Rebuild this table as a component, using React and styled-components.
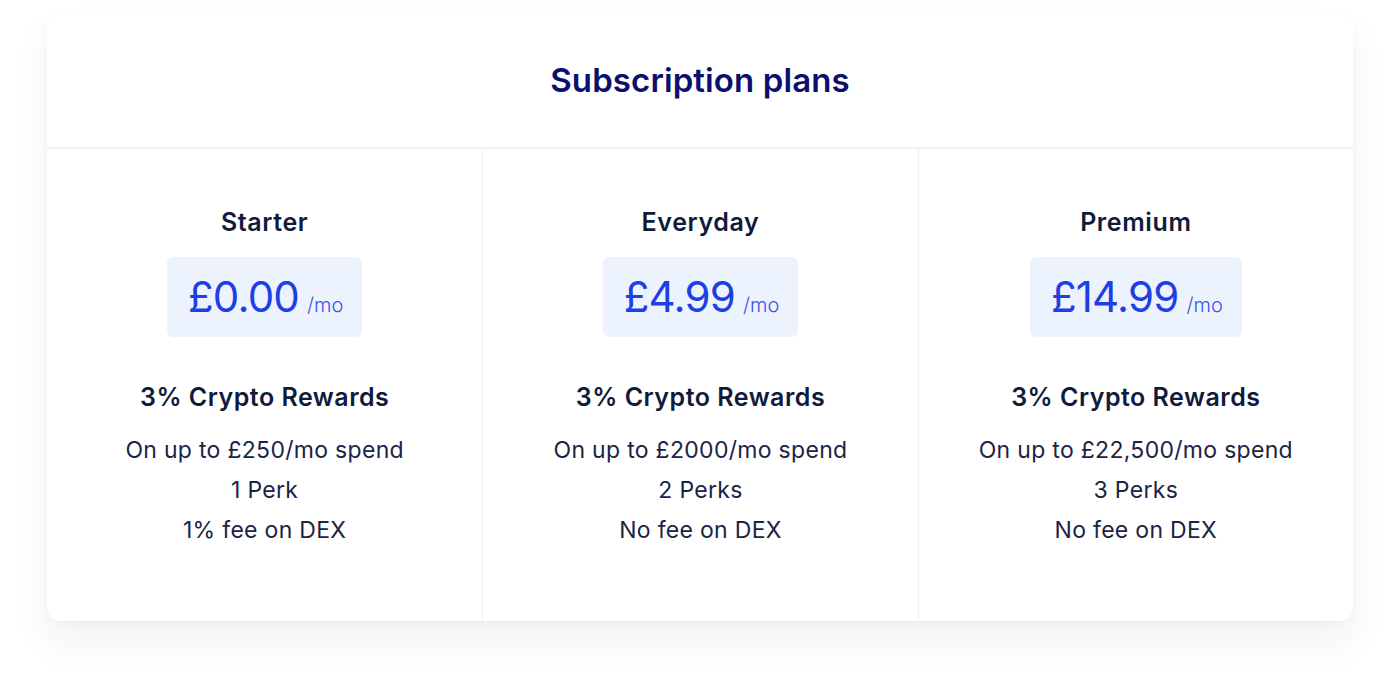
import React from 'react';
import styled, { createGlobalStyle } from 'styled-components';

const GlobalStyle = createGlobalStyle`
  html, body {
    margin: 0;
    padding: 0;
    background: #ffffff;
  }
  body {
    font-family: Inter, "Noto Sans", "Liberation Sans", sans-serif;
    -webkit-font-smoothing: antialiased;
  }
`;

const Page = styled.div`
  width: 1400px;
  height: 700px;
  padding: 13px 47px 0;
  box-sizing: border-box;
`;

const Card = styled.section`
  background: #ffffff;
  border-radius: 14px;
  box-shadow: 0 22px 40px rgba(20, 30, 60, 0.06), 0 2px 10px rgba(20, 30, 60, 0.03);
  overflow: hidden;
`;

const Header = styled.header`
  height: 134px;
  display: flex;
  align-items: center;
  justify-content: center;
  border-bottom: 2px solid #eef0f4;
`;

const Title = styled.h1`
  margin: 0;
  font-size: 33px;
  font-weight: 600;
  color: #0b0f6e;
  letter-spacing: 0.1px;
`;

const Plans = styled.div`
  display: grid;
  grid-template-columns: repeat(3, 1fr);
  height: 472px;
`;

const Plan = styled.div`
  display: flex;
  flex-direction: column;
  align-items: center;
  padding-top: 58px;
  border-left: ${p => (p.first ? 'none' : '1.5px solid #eceef2')};
`;

const PlanName = styled.h2`
  margin: 0;
  font-size: 25px;
  line-height: 30px;
  font-weight: 600;
  letter-spacing: 0.6px;
  color: #101b3b;
`;

const PriceBox = styled.div`
  margin-top: 20px;
  height: 80px;
  padding: 0 19px 0 21px;
  display: flex;
  align-items: baseline;
  justify-content: center;
  line-height: 80px;
  background: #edf3fe;
  border-radius: 6px;
  color: #1d3fe3;
`;

const Amount = styled.span`
  font-size: 42px;
  font-weight: 400;
  letter-spacing: -0.8px;
`;

const Per = styled.span`
  margin-left: 8px;
  font-size: 20px;
  font-weight: 300;
  color: #3a55e0;
`;

const Rewards = styled.h3`
  margin: 45px 0 0;
  font-size: 25px;
  line-height: 30px;
  font-weight: 600;
  letter-spacing: 0.5px;
  color: #101b3b;
`;

const Features = styled.ul`
  list-style: none;
  margin: 18px 0 0;
  padding: 0;
  text-align: center;
`;

const Feature = styled.li`
  font-size: 23px;
  line-height: 40px;
  font-weight: 400;
  letter-spacing: 0.3px;
  color: #1a2444;
`;

const plans = [
  { name: 'Starter', price: '£0.00', features: ['On up to £250/mo spend', '1 Perk', '1% fee on DEX'] },
  { name: 'Everyday', price: '£4.99', features: ['On up to £2000/mo spend', '2 Perks', 'No fee on DEX'] },
  { name: 'Premium', price: '£14.99', features: ['On up to £22,500/mo spend', '3 Perks', 'No fee on DEX'] },
];

export default function App() {
  return (
    <Page>
      <GlobalStyle />
      <Card>
        <Header>
          <Title>Subscription plans</Title>
        </Header>
        <Plans>
          {plans.map((plan, i) => (
            <Plan key={plan.name} first={i === 0}>
              <PlanName>{plan.name}</PlanName>
              <PriceBox>
                <Amount>{plan.price}</Amount>
                <Per>/mo</Per>
              </PriceBox>
              <Rewards>3% Crypto Rewards</Rewards>
              <Features>
                {plan.features.map(f => (
                  <Feature key={f}>{f}</Feature>
                ))}
              </Features>
            </Plan>
          ))}
        </Plans>
      </Card>
    </Page>
  );
}
